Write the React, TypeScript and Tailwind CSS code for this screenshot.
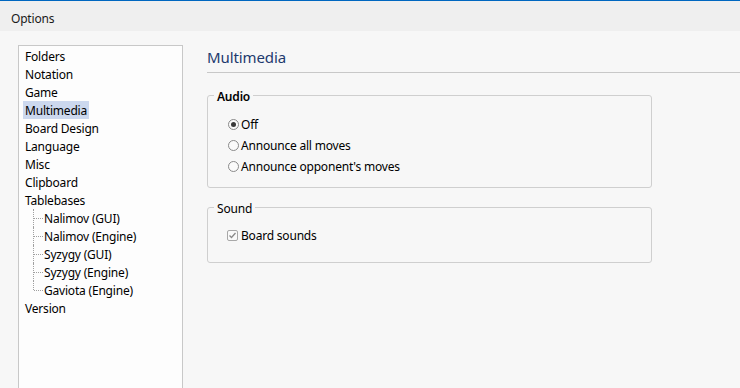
import React from "react";

const font = { fontFamily: '"Segoe UI", "Noto Sans", "Open Sans", sans-serif' };

const topItems = ["Folders", "Notation", "Game", "Multimedia", "Board Design", "Language", "Misc", "Clipboard", "Tablebases"];
const children = ["Nalimov (GUI)", "Nalimov (Engine)", "Syzygy (GUI)", "Syzygy (Engine)", "Gaviota (Engine)"];

function Row({ label, selected }: { label: string; selected?: boolean }) {
  return (
    <div className="h-[18px] flex items-center pl-[4px]">
      <span className={"px-[2px] h-[18px] leading-[19px] " + (selected ? "bg-[#ccd8ee]" : "")}>{label}</span>
    </div>
  );
}

function ChildRow({ label, last }: { label: string; last?: boolean }) {
  return (
    <div className="h-[18px] flex items-center pl-[14px]">
      <div className="relative w-[10px] h-[18px]">
        <span className={"absolute left-0 top-0 w-0 border-l border-dotted border-[#a0a0a0] " + (last ? "h-[9px]" : "h-[18px]")} />
        <span className="absolute left-[1px] top-[9px] w-[9px] h-0 border-t border-dotted border-[#a0a0a0]" />
      </div>
      <span className="pl-[1px] h-[18px] leading-[19px]">{label}</span>
    </div>
  );
}

function Radio({ label, checked }: { label: string; checked?: boolean }) {
  return (
    <div className="h-[21px] flex items-center pl-[20px]">
      <span className="w-[11px] h-[11px] rounded-full border border-[#8a8a8a] bg-[#fafafa] flex items-center justify-center">
        {checked && <span className="w-[5px] h-[5px] rounded-full bg-[#3a3a3a]" />}
      </span>
      <span className="ml-[2px] leading-[22px]">{label}</span>
    </div>
  );
}

export default function App() {
  return (
    <div className="w-[740px] h-[388px] overflow-hidden bg-[#f7f7f7] flex flex-col text-[12px] tracking-[-0.2px] text-black" style={font}>
      <div className="h-[31px] shrink-0 bg-[#efefef] border-t border-[#0067c0] flex items-center pl-[11px] pt-[5px] text-[#1a1a1a]">
        Options
      </div>
      <div className="flex flex-1 pl-[18px] pt-[14px]">
        <div className="w-[165px] h-[400px] shrink-0 border border-[#c8c8c8] bg-[#fdfdfd] pt-[1px]">
          {topItems.map((t) => (
            <Row key={t} label={t} selected={t === "Multimedia"} />
          ))}
          {children.map((c, i) => (
            <ChildRow key={c} label={c} last={i === children.length - 1} />
          ))}
          <Row label="Version" />
        </div>
        <div className="flex-1 pl-[24px]">
          <div className="h-[28px] border-b border-[#c8c8c8] pt-[2px]">
            <div className="text-[15px] leading-[20px] tracking-[-0.1px] text-[#1e3a6e]">Multimedia</div>
          </div>
          <fieldset className="mt-[14px] w-[445px] border border-[#cfcfcf] rounded-[3px] pt-[11px] pb-[10px]">
            <legend className="ml-[6px] px-[3px] font-semibold leading-[16px]">
              <span className="relative top-[2px]">Audio</span>
            </legend>
            <Radio label="Off" checked />
            <Radio label="Announce all moves" />
            <Radio label="Announce opponent's moves" />
          </fieldset>
          <fieldset className="mt-[11px] w-[445px] border border-[#cfcfcf] rounded-[3px] pt-[10px] pb-[16px]">
            <legend className="ml-[6px] px-[3px] leading-[16px]">
              <span className="relative top-[2px]">Sound</span>
            </legend>
            <div className="h-[21px] flex items-center pl-[19px]">
              <span className="w-[11px] h-[11px] rounded-[2px] border border-[#a8a8a8] bg-[#fafafa] flex items-center justify-center">
                <svg width="9" height="9" viewBox="0 0 9 9">
                  <path d="M1.5 4.5 L3.5 6.5 L7.5 2" fill="none" stroke="#8a8a8a" strokeWidth="1.3" />
                </svg>
              </span>
              <span className="ml-[3px] leading-[22px]">Board sounds</span>
            </div>
          </fieldset>
        </div>
      </div>
    </div>
  );
}
